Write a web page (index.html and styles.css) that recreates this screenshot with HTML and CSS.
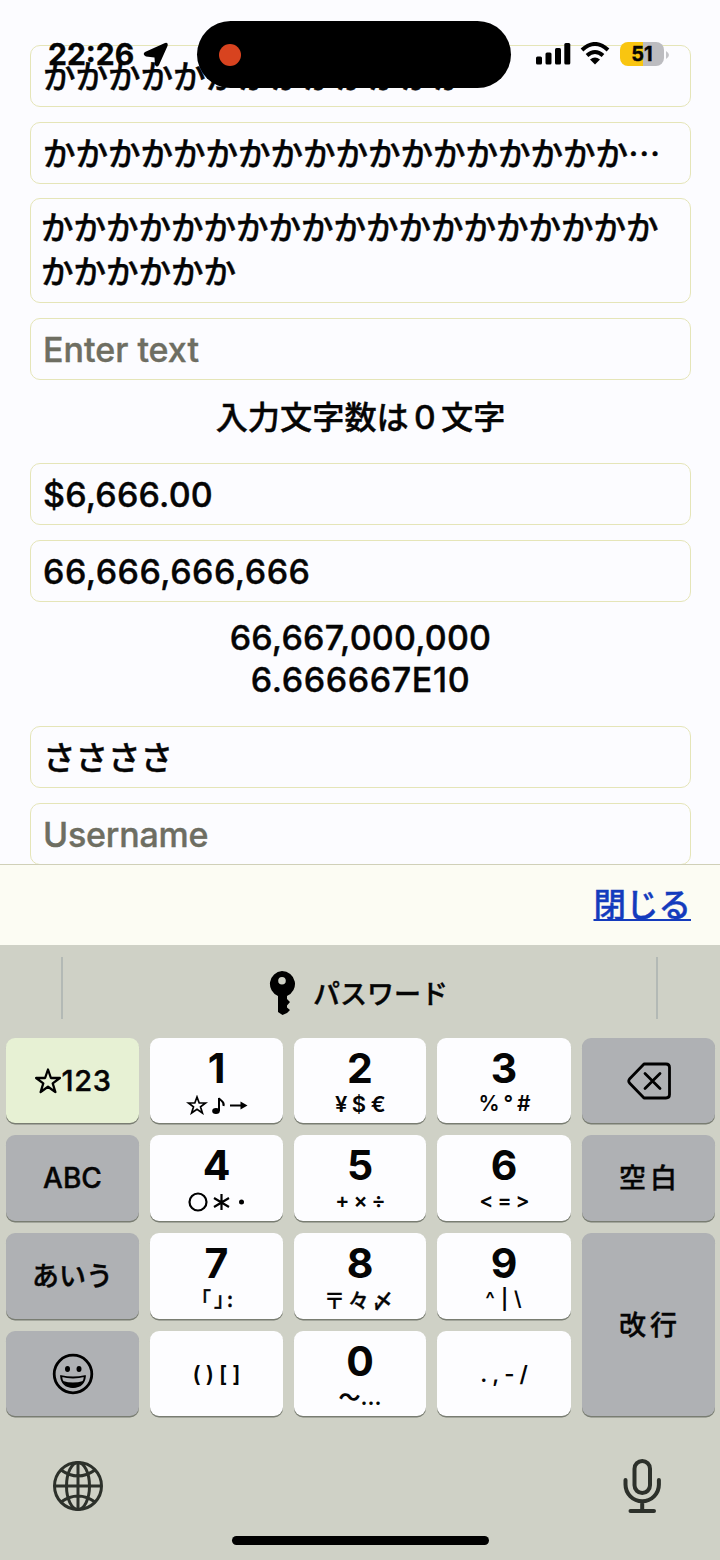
FILE: index.html
```html
<!DOCTYPE html>
<html lang="ja">
<head>
    <meta charset="UTF-8">
    <meta name="viewport" content="width=device-width, initial-scale=1.0">
    <title>TextField Sample</title>
    <link rel="stylesheet" href="styles.css">
</head>
<body>
    <div class="screen">
        <div class="status-bar">
            <span class="time">22:26</span>
            <svg class="location" width="26" height="26" viewBox="0 0 26 26"><path d="M22 1Q25.500 0 24.500 4L16 23Q14 26 12 23L11.500 15.500L3 14.500Q-1 12.500 2 10Z"/></svg>
            <div class="island"><span class="rec-dot"></span></div>
            <svg class="signal" width="35" height="22" viewBox="0 0 35 22"><rect x="0" y="13.500" width="6" height="8" rx="1.500"/><rect x="9.500" y="9.500" width="6" height="12" rx="1.500"/><rect x="19" y="5" width="6" height="16.500" rx="1.500"/><rect x="28.300" y="0" width="6" height="21.500" rx="1.500"/></svg>
            <svg class="wifi" width="30" height="23" viewBox="0 0 30 23"><path d="M2 8Q15 -4 28 8M7 13.500Q15 6.500 23 13.500" fill="none" stroke="#000" stroke-width="4"/><path d="M10 17.500Q15 13.500 20 17.500L15 22.500Z"/></svg>
            <div class="battery"><span>51</span></div>
            <svg class="battery-cap" width="3" height="10" viewBox="0 0 3 10"><path d="M0 1Q3 3 3 5T0 9Z" fill="#c4c4c8"/></svg>
        </div>

        <div class="form">
            <div class="field">かかかかかかかかかかかかか</div>
            <div class="field">かかかかかかかかかかかかかかかかかか<span class="dots">…</span></div>
            <div class="field multiline">かかかかかかかかかかかかかかかかかかか<br>かかかかかか</div>
            <div class="field latin placeholder">Enter text</div>
            <p class="count">入力文字数は０文字</p>
            <div class="field latin">$6,666.00</div>
            <div class="field latin digits">66,666,666,666</div>
            <p class="values">66,667,000,000<br><span class="digits">6.666667E10</span></p>
            <div class="field">ささささ</div>
            <div class="field latin placeholder username">Username</div>
        </div>

        <div class="toolbar"><a class="close">閉じる</a></div>

        <div class="keyboard">
            <div class="suggestions">
                <span class="divider"></span>
                <div class="suggestion">
                    <svg width="28" height="46" viewBox="0 0 28 46"><path fill-rule="evenodd" d="M14 1a13 13 0 0 1 5 25v3l3 3-3 3.500v2l3 2.500-3 3-4.500 2-4.500-3V26A13 13 0 0 1 14 1Zm0 6a3.800 3.800 0 1 0 0 7.600a3.800 3.800 0 0 0 0-7.600Z"/></svg>
                    <span>パスワード</span>
                </div>
                <span class="divider"></span>
            </div>

            <div class="keys">
                <div class="key active"><svg width="28" height="28" viewBox="0 0 28 28"><path d="M14 2.500l2.900 8.500h9l-7.200 5.400 2.700 8.600-7.400-5.300-7.400 5.300 2.700-8.600L2.100 11h9Z" fill="none" stroke="#000" stroke-width="2.300" stroke-linejoin="round"/></svg><span>123</span></div>
                <div class="key num"><b>1</b>
                    <svg class="sub" width="62" height="20" viewBox="0 0 62 20" fill="none" stroke="#000" stroke-width="1.700"><path d="M11 2l2.200 6h6.300l-5 3.800 1.900 6.200-5.400-3.800L5.600 18l1.900-6.200-5-3.800h6.300Z"/><path d="M33 16V3c1 3 6 3 4.500 8" stroke-width="2"/><ellipse cx="30" cy="16" rx="3" ry="2.200" fill="#000"/><path d="M44 10.500h13" stroke-width="2.200"/><path d="M54.500 6.500l7 4-7 4Z" fill="#000" stroke="none"/></svg>
                </div>
                <div class="key num"><b>2</b><small class="wide">¥$€</small></div>
                <div class="key num"><b>3</b><small class="wide percent">%°#</small></div>
                <div class="key gray"><svg width="44" height="38" viewBox="0 0 44 38" fill="none" stroke="#000" stroke-width="2.800" stroke-linejoin="round" stroke-linecap="round"><path d="M17 2H39Q42.500 2 42.500 5.500V32.500Q42.500 36 39 36H17L2.500 21Q1 19 2.500 17Z"/><path d="M18 11.500l15 15M33 11.500l-15 15"/></svg></div>

                <div class="key gray abc">ABC</div>
                <div class="key num"><b>4</b>
                    <svg class="sub" width="62" height="20" viewBox="0 0 62 20" fill="none" stroke="#000" stroke-width="2.200"><circle cx="12" cy="10" r="8.500"/><path d="M35.500 2v16M28 6l15 9M43 6l-15 9"/><circle cx="55.500" cy="10" r="2.500" fill="#000" stroke="none"/></svg>
                </div>
                <div class="key num"><b>5</b><small class="wide math">+×÷</small></div>
                <div class="key num"><b>6</b><small class="wide math">&lt;=&gt;</small></div>
                <div class="key gray spaced">空白</div>

                <div class="key gray kana">あいう</div>
                <div class="key num"><b>7</b><small class="brackets">「」:</small></div>
                <div class="key num"><b>8</b><small class="marks">〒々〆</small></div>
                <div class="key num"><b>9</b><small class="wide slashes">^|\</small></div>
                <div class="key gray spaced enter-key">改行</div>

                <div class="key gray"><svg width="42" height="42" viewBox="0 0 42 42"><circle cx="21" cy="21" r="18.800" fill="none" stroke="#000" stroke-width="2.800"/><ellipse cx="15.500" cy="16" rx="2.500" ry="3"/><ellipse cx="27" cy="16" rx="2.500" ry="3"/><path d="M9 23Q21 26 33 23Q32 34 21 34T9 23Z" fill="none" stroke="#000" stroke-width="1.800" stroke-linejoin="round"/><path d="M11 28Q21 31 31 28Q28 34.500 21 34.500T11 28Z"/></svg></div>
                <div class="key num only"><small class="parens">()[]</small></div>
                <div class="key num"><b>0</b><small class="wave">～<i>...</i></small></div>
                <div class="key num only"><small class="points">.,-/</small></div>
            </div>

            <div class="bottom-row">
                <svg width="52" height="52" viewBox="0 0 52 52" fill="none" stroke="#2d312b" stroke-width="3"><circle cx="26" cy="26" r="23.500"/><ellipse cx="26" cy="26" rx="11.500" ry="23.500"/><path d="M26 2.500v47M2.500 26h47M9 10Q26 22 43 10M9 42Q26 30 43 42"/></svg>
                <svg width="40" height="56" viewBox="0 0 40 56" fill="none" stroke="#2d312b" stroke-width="4" stroke-linecap="round"><rect x="12.500" y="3" width="15.500" height="32" rx="7.750"/><path d="M3.500 22v4.500a16.700 16.700 0 0 0 33.400 0V22M20.200 43.500v9M8.500 53h23.500"/></svg>
            </div>
            <div class="home-indicator"></div>
        </div>
    </div>
</body>
</html>
```
FILE: styles.css
```css
:root {
    --page-bg: #fcfcff;
    --keyboard-bg: #cfd1c6;
    --key-gray: #afb1b4;
    --border: #e5e5b8;
}

* {
    box-sizing: border-box;
}

body {
    margin: 0;
    background-color: var(--page-bg);
    color: #050505;
    font-family: Inter, "Noto Sans CJK JP", sans-serif;
    font-weight: 500;
    -webkit-text-stroke: 0.4px;
}

svg {
    display: block;
    flex: none;
}

.screen {
    position: relative;
    width: 720px;
    height: 1560px;
    overflow: hidden;
}

/* status bar floats over the scrolled form */
.status-bar {
    position: absolute;
    top: 21px;
    left: 0;
    width: 720px;
    height: 67px;
    display: flex;
    align-items: center;
    padding-left: 48px;
}

.time {
    width: 86px;
    padding-bottom: 2px;
    font-size: 30px;
    font-weight: 700;
}

.location {
    margin-left: 9px;
}

.island {
    display: flex;
    align-items: center;
    width: 314px;
    height: 67px;
    margin-left: 28px;
    padding-left: 22px;
    border-radius: 34px;
    background-color: #000;
}

.rec-dot {
    width: 22px;
    height: 22px;
    border-radius: 50%;
    background-color: #d8431f;
}

.signal {
    margin-left: 25px;
}

.signal,
.wifi {
    margin-bottom: 2px;
}

.wifi {
    margin-left: 9px;
}

.battery {
    width: 44px;
    height: 24px;
    margin-left: 10px;
    margin-bottom: 2px;
    border-radius: 8px;
    background: linear-gradient(90deg, #f9c510 52%, #bcbcc0 52%);
    font-size: 20px;
    font-weight: 700;
    line-height: 24px;
    text-align: center;
}

.battery-cap {
    margin-left: 2px;
}

.form {
    display: flex;
    flex-direction: column;
    gap: 15px;
    height: 864px;
    padding: 45px 29px 0 30px;
    overflow: hidden;
}

.field {
    flex: none;
    height: 62px;
    padding-left: 12px;
    border: 1px solid var(--border);
    border-radius: 10px;
    font-family: "Noto Sans CJK JP", sans-serif;
    font-size: 32.5px;
    line-height: 57px;
    white-space: nowrap;
}

.multiline {
    height: 105px;
    margin-top: -1px;
    padding: 5px 0 0 10px;
    line-height: 44px;
}

.latin {
    font-family: Inter, sans-serif;
    font-size: 34px;
    line-height: 61px;
    letter-spacing: 0.2px;
}

.digits {
    letter-spacing: 0.5px;
}

.placeholder {
    color: #6e6e62;
    letter-spacing: 0;
}

.username {
    letter-spacing: -0.2px;
}

.count,
.values {
    flex: none;
    margin: 0;
    text-align: center;
}

.count {
    height: 53px;
    font-family: "Noto Sans CJK JP", sans-serif;
    font-size: 32.2px;
    line-height: 40px;
}

.values {
    height: 94px;
    font-size: 34px;
    letter-spacing: 0.2px;
    line-height: 42px;
}

.values .digits {
    letter-spacing: 0.6px;
}

.toolbar {
    display: flex;
    align-items: center;
    justify-content: flex-end;
    height: 81px;
    padding: 0 29px 5px 0;
    border-top: 1px solid #d0d0b8;
    background-color: #fcfcf3;
}

.close {
    color: #143bbd;
    font-family: "Noto Sans CJK JP", sans-serif;
    font-size: 32.5px;
    text-decoration: underline;
    text-decoration-thickness: 2px;
    text-underline-offset: 2px;
}

.keyboard {
    height: 615px;
    padding: 12px 5px 0 6px;
    background-color: var(--keyboard-bg);
}

.suggestions {
    display: flex;
    justify-content: space-between;
    height: 81px;
    padding: 0 57px 0 55px;
}

.divider {
    width: 2px;
    height: 62px;
    background-color: #b3b9b5;
}

.suggestion {
    display: flex;
    align-items: center;
    gap: 17px;
    height: 72px;
    margin-right: 3px;
    font-family: "Noto Sans CJK JP", sans-serif;
    font-size: 27px;
}

.suggestion span {
    padding-bottom: 2px;
}

.keys {
    display: grid;
    grid-template-columns: 133px 133px 132px 134px 133px;
    grid-template-rows: 85px 86px 86px 85px;
    column-gap: 11px;
    row-gap: 12px;
}

.key {
    display: flex;
    align-items: center;
    justify-content: center;
    border-radius: 9px;
    background-color: #fdfdff;
    box-shadow: 0 1.500px 0 #797d72;
    font-size: 28px;
    overflow: hidden;
}

.gray {
    background-color: var(--key-gray);
}

.active {
    background-color: #e7f1d4;
    font-size: 29px;
    letter-spacing: 0.6px;
}

.num {
    flex-direction: column;
    justify-content: flex-start;
}

.num b {
    height: 55px;
    font-size: 41px;
    font-weight: 700;
    line-height: 60px;
    -webkit-text-stroke: 0;
}

.num small {
    height: 22px;
    font-size: 22px;
    font-weight: 600;
    line-height: 22px;
    white-space: nowrap;
    -webkit-text-stroke: 0;
}

.only {
    justify-content: center;
}

.sub {
    margin-top: 2px;
}

.num .wide {
    letter-spacing: 4.500px;
    padding-left: 5px;
}

.num .percent {
    font-size: 21px;
    letter-spacing: 4px;
}

.num .math {
    font-size: 21px;
    letter-spacing: 4px;
}

.num .slashes {
    font-size: 20px;
    letter-spacing: 6px;
}

.num .brackets {
    padding-left: 4px;
    font-family: "Noto Sans CJK JP", sans-serif;
    font-size: 20px;
    font-weight: 500;
    font-feature-settings: "halt";
    letter-spacing: 3px;
    -webkit-text-stroke: 0.4px;
}

.num .marks {
    font-family: "Noto Sans CJK JP", sans-serif;
    font-size: 21px;
    font-weight: 500;
    letter-spacing: 3px;
    -webkit-text-stroke: 0.4px;
}

.num .parens,
.num .points {
    padding-left: 5px;
    letter-spacing: 5px;
}

.wave i {
    font-style: normal;
    letter-spacing: 0;
}

.spaced,
.kana {
    padding-bottom: 3px;
    font-family: "Noto Sans CJK JP", sans-serif;
    font-size: 27px;
}

.spaced {
    letter-spacing: 4px;
    padding-left: 3px;
}

.enter-key {
    grid-row: span 2;
}

.bottom-row {
    display: flex;
    align-items: center;
    justify-content: space-between;
    height: 56px;
    margin-top: 42px;
    padding: 0 53px 0 46px;
}

.home-indicator {
    width: 257px;
    height: 9px;
    margin: 22px auto 0;
    border-radius: 5px;
    background-color: #000;
}
```
